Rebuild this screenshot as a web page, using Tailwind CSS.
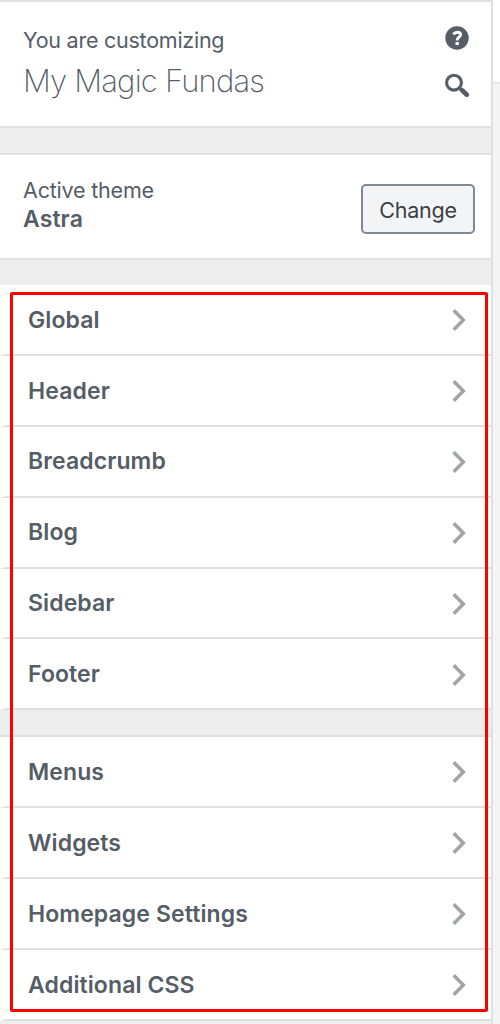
<!DOCTYPE html>
<html lang="en">

<head>
  <meta charset="UTF-8" />
  <meta name="viewport" content="width=device-width, initial-scale=1.0" />
  <title>Customize: My Magic Fundas</title>
  <script src="https://cdn.jsdelivr.net/npm/@tailwindcss/browser@4"></script>
</head>

<body class="bg-white text-[#555d66] font-['Inter','Liberation_Sans',sans-serif]">
  <div class="relative flex h-[1024px] w-[500px] overflow-hidden">
    <!-- Customizer sidebar -->
    <aside class="flex w-[493px] shrink-0 flex-col border-t-2 border-r-2 border-[#e0e0e0] bg-[#eee]">
      <!-- Site title -->
      <header class="flex h-[126px] shrink-0 justify-between border-b-2 border-[#e0e0e0] bg-white pt-[24px] pr-[22px] pl-[23px]">
        <div>
          <p class="text-[21.5px] leading-[29px] tracking-[-0.25px] whitespace-nowrap"><span>You are customizing</span></p>
          <h1 class="mt-[6px] text-[31px] leading-[40px] font-extralight tracking-[-0.8px] whitespace-nowrap"><span>My Magic Fundas</span></h1>
        </div>
        <div class="flex flex-col gap-[22px]">
          <svg class="size-6" viewBox="0 0 24 24" fill="none">
            <circle cx="12" cy="12" r="11.7" fill="#555d66" />
            <path d="M8.3 8.3C9.3 7 10.6 6.2 12.3 6.2C14.4 6.2 15.6 7.2 15.6 8.8C15.6 11.3 12.1 11.2 12.1 14.4" stroke="#fff" stroke-width="2.9" />
            <rect x="10.5" y="15.9" width="3.4" height="3.2" rx="0.6" fill="#fff" />
          </svg>
          <svg class="size-6 overflow-visible" viewBox="0 0 24 24" fill="none" stroke="#555d66">
            <circle cx="9" cy="10.7" r="7.4" stroke-width="3.1" />
            <path d="M14.5 16L17 18.5" stroke-width="3.4" />
            <path d="M17.3 18.6L21.8 22.7" stroke-width="4.8" stroke-linecap="round" />
          </svg>
        </div>
      </header>

      <!-- Active theme -->
      <section class="mt-[25px] flex h-[107px] shrink-0 justify-between border-t-2 border-b-2 border-[#e0e0e0] bg-white pr-4 pl-[23px]">
        <div class="pt-[21px] whitespace-nowrap">
          <p class="text-[21.5px] leading-[29px] tracking-[-0.2px]"><span>Active theme</span></p>
          <h2 class="text-[23px] leading-[29px] font-semibold tracking-[0.1px]"><span>Astra</span></h2>
        </div>
        <button class="mt-[29px] h-[50px] w-[114px] rounded-[5px] border-2 border-[#7e8993] bg-[#f3f4f5] pt-[2px] text-[21.5px] tracking-[-0.25px] text-[#3a3f45]"><span>Change</span></button>
      </section>

      <ul id="theme-sections" class="mt-[25px] shrink-0"></ul>
      <ul id="core-sections" class="mt-[25px] shrink-0 border-t-2 border-[#e0e0e0]"></ul>
    </aside>

    <!-- Preview edge -->
    <div class="mt-[82px] flex-1 border-t-2 border-[#e8e8e8] bg-[#f4f4f4]"></div>

    <!-- Highlight box -->
    <div class="absolute top-[292px] left-[10px] h-[720px] w-[478px] rounded-[2px] border-3 border-[#f00]"></div>
  </div>

  <script>
    const themeSections = ["Global", "Header", "Breadcrumb", "Blog", "Sidebar", "Footer"];
    const coreSections = ["Menus", "Widgets", "Homepage Settings", "Additional CSS"];

    function renderSections(id, labels) {
      document.getElementById(id).innerHTML = labels.map(label => `
        <li class="flex h-[70.9px] items-center justify-between border-b-2 border-l-6 border-b-[#e0e0e0] border-l-white bg-white pt-[1.4px] pr-[24px] pl-[22px]">
          <h3 class="text-[23px] leading-[29px] font-semibold tracking-[0.1px] whitespace-nowrap"><span>${label}</span></h3>
          <svg class="h-[24px] w-[15px]" viewBox="0 0 15 24" fill="none" stroke="#a0a5aa" stroke-width="3.6">
            <path d="M1.7 2.3L11.3 12L1.7 21.7" />
          </svg>
        </li>
      `).join("");
    }

    renderSections("theme-sections", themeSections);
    renderSections("core-sections", coreSections);
  </script>
</body>

</html>
